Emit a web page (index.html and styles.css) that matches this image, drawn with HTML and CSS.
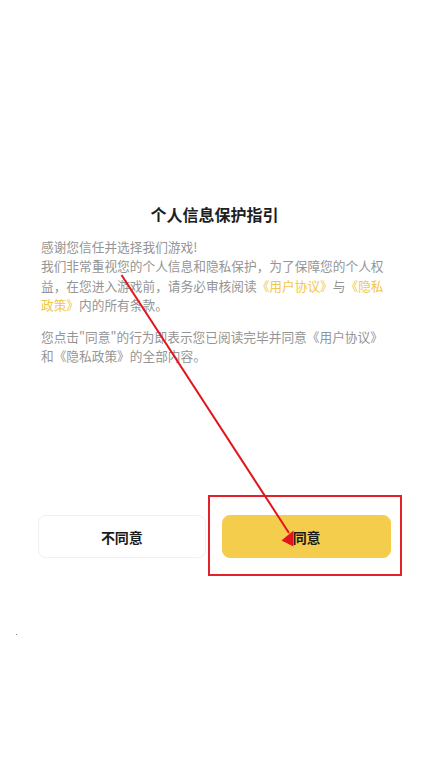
FILE: index.html
```html
<!DOCTYPE html>
<html lang="zh-CN">
<head>
<meta charset="utf-8">
<title>个人信息保护指引</title>
<link rel="stylesheet" href="styles.css">
</head>
<body>
<div class="page">
  <main class="dialog">
    <h1 class="title">个人信息保护指引</h1>
    <div class="content">
      <p class="para">感谢您信任并选择我们游戏!<br>我们非常重视您的个人信息和隐私保护，为了保障您的个人权益，在您进入游戏前，请务必审核阅读<span class="link">《用户协议》</span>与<span class="link">《隐私政策》</span>内的所有条款。</p>
      <p class="para">您点击"同意"的行为即表示您已阅读完毕并同意《用户协议》和《隐私政策》的全部内容。</p>
    </div>
    <div class="actions">
      <button class="btn btn-ghost">不同意</button>
      <button class="btn btn-primary">同意</button>
    </div>
  </main>
  <div class="highlight-box"></div>
  <svg class="arrow" width="428" height="762" viewBox="0 0 428 762">
    <line x1="121.5" y1="275" x2="289" y2="533" stroke="#e0161c" stroke-width="2"/>
    <polygon points="281.5,540.5 293.5,530.5 293.5,546.5" fill="#e0161c"/>
  </svg>
  <span class="dot"></span>
</div>
</body>
</html>
```
FILE: styles.css
```css
html, body {
  margin: 0;
  padding: 0;
  background: #ffffff;
}
body {
  font-family: "Noto Sans CJK SC", "Noto Sans", sans-serif;
}
.page {
  position: relative;
  width: 428px;
  height: 762px;
  overflow: hidden;
}
.dialog {
  padding-top: 203px;
  display: flex;
  flex-direction: column;
}
.title {
  margin: 0;
  font-size: 16px;
  line-height: 22px;
  font-weight: bold;
  color: #1e1e1e;
  text-align: center;
  padding-left: 1px;
}
.content {
  margin: 12px 0 0 41px;
  width: 346px;
}
.para {
  margin: 0 0 12px 0;
  font-size: 12.7px;
  line-height: 19.4px;
  color: #959595;
}
.link {
  color: #f2c64a;
}
.actions {
  margin-top: 138px;
  padding: 0 37px 0 37.5px;
  display: flex;
  gap: 16px;
}
.btn {
  flex: 1;
  height: 43px;
  border-radius: 8px;
  font-family: "Noto Sans CJK SC", "Noto Sans", sans-serif;
  font-size: 14px;
  font-weight: bold;
  color: #1a1a1a;
  padding: 0;
}
.btn-ghost {
  background: #ffffff;
  border: 1px solid #f0f0f0;
}
.btn-primary {
  background: #f5cd4c;
  border: 1px solid #f5cd4c;
}
.highlight-box {
  position: absolute;
  left: 208px;
  top: 495px;
  width: 190px;
  height: 77px;
  border: 2px solid #e3212a;
}
.arrow {
  position: absolute;
  left: 0;
  top: 0;
  pointer-events: none;
}
.dot {
  position: absolute;
  left: 16px;
  top: 634px;
  width: 1px;
  height: 1px;
  background: #888;
}
```
